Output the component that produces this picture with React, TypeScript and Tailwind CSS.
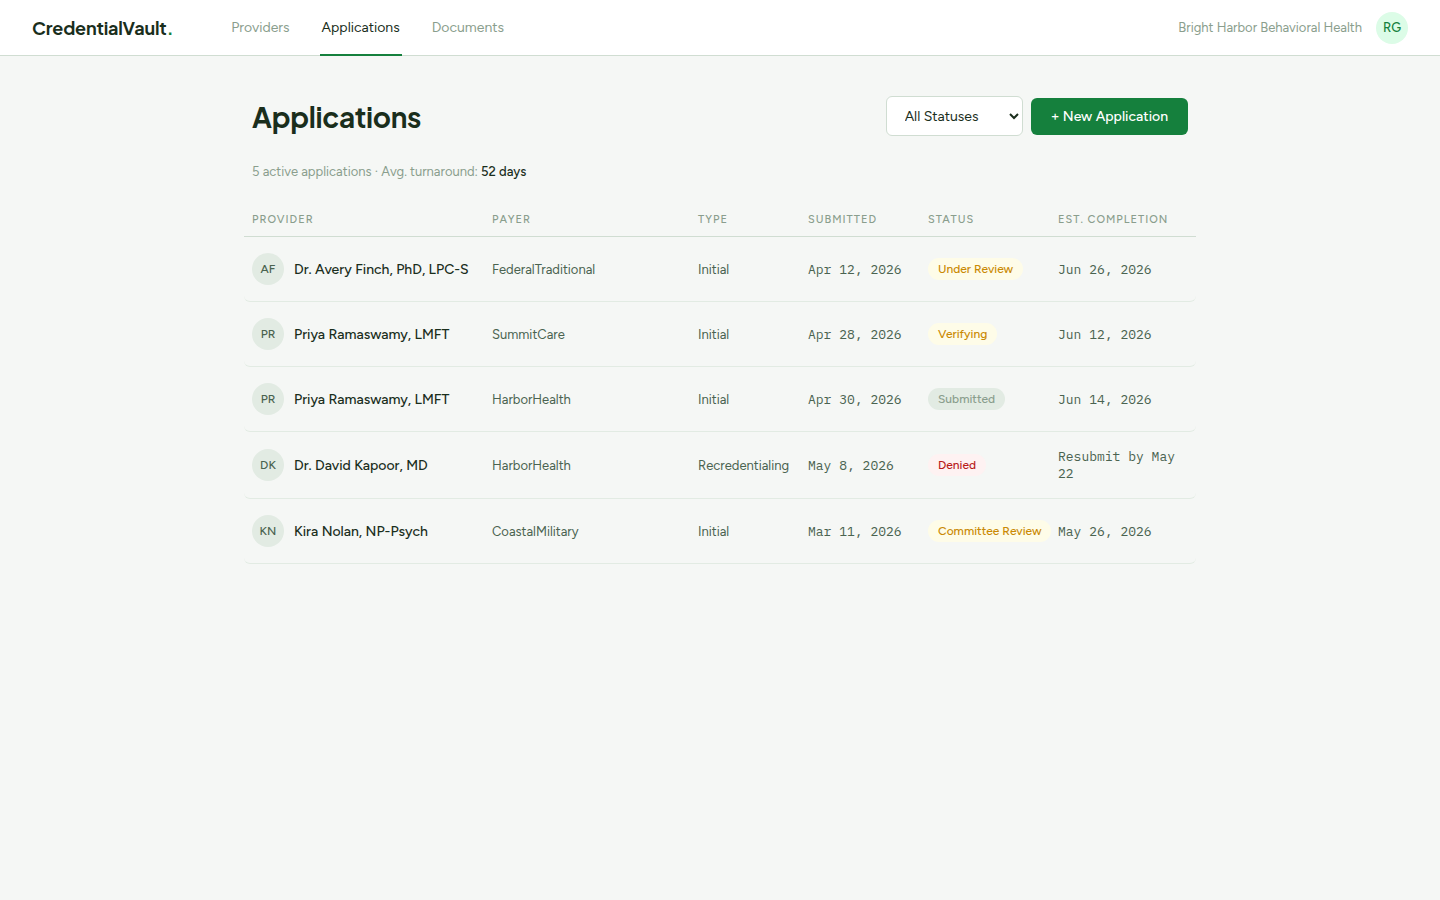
import React from 'react';

type Tone = 'warning' | 'neutral' | 'danger';

interface Application {
  initials: string;
  provider: string;
  payer: string;
  type: string;
  submitted: string;
  status: string;
  tone: Tone;
  completion: string;
}

const applications: Application[] = [
  { initials: 'AF', provider: 'Dr. Avery Finch, PhD, LPC-S', payer: 'FederalTraditional', type: 'Initial', submitted: 'Apr 12, 2026', status: 'Under Review', tone: 'warning', completion: 'Jun 26, 2026' },
  { initials: 'PR', provider: 'Priya Ramaswamy, LMFT', payer: 'SummitCare', type: 'Initial', submitted: 'Apr 28, 2026', status: 'Verifying', tone: 'warning', completion: 'Jun 12, 2026' },
  { initials: 'PR', provider: 'Priya Ramaswamy, LMFT', payer: 'HarborHealth', type: 'Initial', submitted: 'Apr 30, 2026', status: 'Submitted', tone: 'neutral', completion: 'Jun 14, 2026' },
  { initials: 'DK', provider: 'Dr. David Kapoor, MD', payer: 'HarborHealth', type: 'Recredentialing', submitted: 'May 8, 2026', status: 'Denied', tone: 'danger', completion: 'Resubmit by May 22' },
  { initials: 'KN', provider: 'Kira Nolan, NP-Psych', payer: 'CoastalMilitary', type: 'Initial', submitted: 'Mar 11, 2026', status: 'Committee Review', tone: 'warning', completion: 'May 26, 2026' },
];

const toneClasses: Record<Tone, string> = {
  warning: 'bg-[#fefce8] text-[#ca8a04]',
  neutral: 'bg-[#e2ebe3] text-[#8a9e8d]',
  danger: 'bg-[#fef2f2] text-[#b91c1c]',
};

const columns: { label: string; width: string }[] = [
  { label: 'Provider', width: 'w-60' },
  { label: 'Payer', width: '' },
  { label: 'Type', width: 'w-[110px]' },
  { label: 'Submitted', width: 'w-[120px]' },
  { label: 'Status', width: 'w-[130px]' },
  { label: 'Est. Completion', width: 'w-[146px]' },
];

const tabs = ['Providers', 'Applications', 'Documents'];

function TopBar() {
  return (
    <header className="flex h-14 items-center border-b border-[#d0ddd2] bg-white px-8">
      <a href="#" className="font-['Plus_Jakarta_Sans','Figtree',sans-serif] text-lg font-bold tracking-[-0.01em]">
        CredentialVault<span className="text-[#15803d]">.</span>
      </a>
      <nav className="ml-14 flex gap-7 self-stretch">
        {tabs.map((tab) => (
          <a
            key={tab}
            href="#"
            aria-current={tab === 'Applications' ? 'page' : undefined}
            className={
              tab === 'Applications'
                ? '-mb-px flex items-center border-b-2 border-[#15803d] px-0.5 pt-0.5 text-sm'
                : '-mb-px flex items-center border-b-2 border-transparent px-0.5 pt-0.5 text-sm text-[#8a9e8d]'
            }
          >
            {tab}
          </a>
        ))}
      </nav>
      <div className="ml-auto flex items-center gap-3.5">
        <span className="text-[13px] text-[#8a9e8d]">Bright Harbor Behavioral Health</span>
        <span className="flex size-8 items-center justify-center rounded-full bg-[#dcfce7] text-[13px] font-medium text-[#15803d]">RG</span>
      </div>
    </header>
  );
}

function ApplicationRow({ app }: { app: Application }) {
  const cell = 'border-b border-[#e2ebe3] py-4 pl-2 text-left align-middle text-[13px] leading-[17px] text-[#4a6350]';
  const mono = "font-['IBM_Plex_Mono','Liberation_Mono',monospace]";
  return (
    <tr>
      <td className="rounded-bl-md border-b border-[#e2ebe3] py-4 pl-2">
        <div className="flex items-center gap-2.5">
          <span className="flex size-8 shrink-0 items-center justify-center rounded-full bg-[#e2ebe3] text-xs font-medium text-[#4a6350]">{app.initials}</span>
          <span className="text-sm leading-[17px] font-medium whitespace-nowrap">{app.provider}</span>
        </div>
      </td>
      <td className={cell}>{app.payer}</td>
      <td className={cell}>{app.type}</td>
      <td className={`${cell} ${mono}`}>{app.submitted}</td>
      <td className={cell}>
        <span className={`inline-flex rounded-full px-2.5 py-1 align-middle text-xs leading-[14px] font-medium whitespace-nowrap ${toneClasses[app.tone]}`}>{app.status}</span>
      </td>
      <td className={`${cell} ${mono} rounded-br-md pr-2`}>{app.completion}</td>
    </tr>
  );
}

export default function App() {
  return (
    <div className="min-h-screen bg-[#f5f7f5] font-['Figtree','Lato',sans-serif] text-[#1a2e1c]">
      <TopBar />
      <main className="mx-auto max-w-[1000px] px-8 pt-10 pb-16">
        <div className="flex items-center justify-between">
          <h1 className="pt-0.5 font-['Plus_Jakarta_Sans','Figtree',sans-serif] text-[28px] leading-9 font-bold tracking-[-0.01em]">Applications</h1>
          <div className="flex items-center gap-2">
            <label htmlFor="status-filter" className="sr-only">Filter by status</label>
            <select id="status-filter" defaultValue="All Statuses" className="h-10 w-[137px] rounded-md border border-[#d0ddd2] bg-white px-3.5 text-sm">
              <option>All Statuses</option>
              <option>Submitted</option>
              <option>Verifying</option>
              <option>Denied</option>
            </select>
            <button type="button" className="rounded-md bg-[#15803d] px-5 py-2.5 text-sm leading-[17px] font-medium text-white">+ New Application</button>
          </div>
        </div>
        <p className="mt-7 text-[13px] leading-4 text-[#8a9e8d]">
          5 active applications · Avg. turnaround: <strong className="font-medium text-[#1a2e1c]">52 days</strong>
        </p>
        <div className="-mx-2 mt-6">
          <table className="w-full table-fixed border-separate border-spacing-0">
            <thead>
              <tr>
                {columns.map(({ label, width }) => (
                  <th
                    key={label}
                    scope="col"
                    className={`border-b border-[#d0ddd2] py-2 pl-2 text-left text-[11px] leading-4 font-medium tracking-[1px] whitespace-nowrap text-[#8a9e8d] uppercase ${width}`}
                  >
                    {label}
                  </th>
                ))}
              </tr>
            </thead>
            <tbody>
              {applications.map((app) => (
                <ApplicationRow key={`${app.provider}-${app.payer}`} app={app} />
              ))}
            </tbody>
          </table>
        </div>
      </main>
    </div>
  );
}
